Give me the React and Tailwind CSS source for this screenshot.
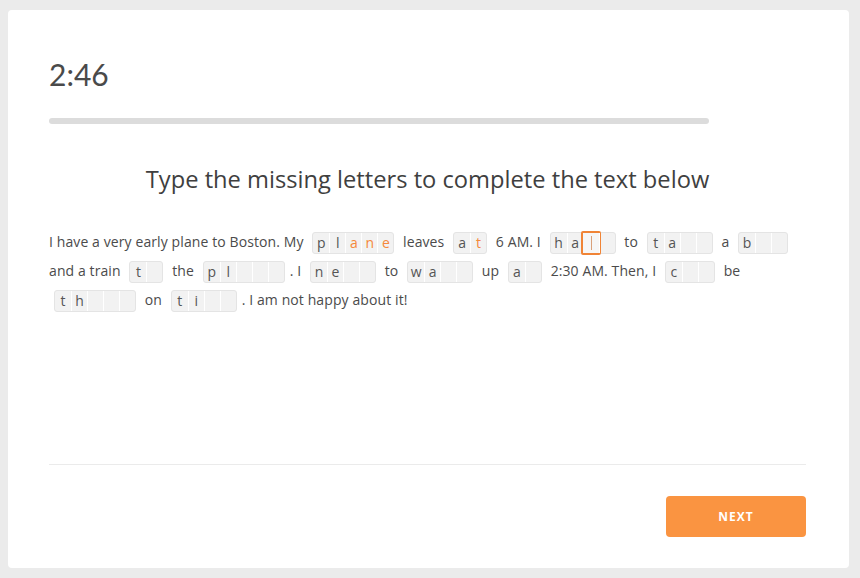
import React from "react";

const LATO = { fontFamily: "Lato, 'Open Sans', sans-serif" };
const OPEN = { fontFamily: "'Open Sans', Lato, sans-serif" };

function Box({ cells }) {
  return (
    <span className="inline-flex align-middle mx-[5px] h-[22px] border border-[#e4e4e4] bg-[#f2f2f2] rounded-[3px] tracking-normal">
      {cells.map((c, i) => {
        const first = i === 0;
        const base =
          "relative w-[16px] h-full flex items-center justify-center text-[14px] leading-none " +
          (first ? "" : "border-l border-white ");
        if (c === "|") {
          return (
            <span key={i} className={base}>
              <span className="absolute -left-[3px] -right-[2px] -top-[2px] -bottom-[2px] border-2 border-[#f08436] rounded-[2px] bg-[#f6f6f6]" />
              <span className="relative w-px h-[14px] bg-[#d9a07a]" />
            </span>
          );
        }
        const typed = c.startsWith("*");
        const ch = typed ? c.slice(1) : c;
        return (
          <span
            key={i}
            className={base + (typed ? "text-[#f5893c]" : "text-[#555555]")}
          >
            {ch}
          </span>
        );
      })}
    </span>
  );
}

function Row({ children }) {
  return (
    <div className="h-[29px] leading-[29px] whitespace-nowrap text-[14px] tracking-[0.1px] text-[#4b4b4b]">
      {children}
    </div>
  );
}

export default function App() {
  return (
    <div
      className="w-[860px] h-[578px] bg-[#ebebeb] pt-[10px] pl-[8px] overflow-hidden"
      style={OPEN}
    >
      <div className="w-[841px] h-[558px] bg-white rounded-[4px] pl-[41px] pr-[43px] flex flex-col">
        <div className="mt-[46px] text-[30px] leading-[36px] text-[#4a4a4a]" style={LATO}>2:46</div>
        <div className="mt-[26px] w-[660px] h-[6px] rounded-full bg-[#dcdcdc]" />
        <div className="mt-[40px] text-center text-[23.7px] leading-[30px] text-[#3f3f3f]">
          Type the missing letters to complete the text below
        </div>
        <div className="mt-[33px]">
          <Row>
            I have a very early plane to Boston. My{" "}
            <Box cells={["p", "l", "*a", "*n", "*e"]} /> leaves{" "}
            <Box cells={["a", "*t"]} /> 6 AM. I{" "}
            <Box cells={["h", "a", "|", ""]} /> to{" "}
            <Box cells={["t", "a", "", ""]} /> a{" "}
            <Box cells={["b", "", ""]} />
          </Row>
          <Row>
            and a train <Box cells={["t", ""]} /> the{" "}
            <Box cells={["p", "l", "", "", ""]} />. I{" "}
            <Box cells={["n", "e", "", ""]} /> to{" "}
            <Box cells={["w", "a", "", ""]} /> up <Box cells={["a", ""]} /> 2:30 AM.
            Then, I <Box cells={["c", "", ""]} /> be
          </Row>
          <Row>
            <Box cells={["t", "h", "", "", ""]} /> on{" "}
            <Box cells={["t", "i", "", ""]} />. I am not happy about it!
          </Row>
        </div>
        <div className="mt-[150px] h-px bg-[#ebebeb]" />
        <div className="mt-[31px] flex justify-end">
          <button className="w-[140px] h-[41px] rounded-[4px] bg-[#fa9441] text-white text-[12px] font-bold tracking-[0.08em]">
            NEXT
          </button>
        </div>
      </div>
    </div>
  );
}
